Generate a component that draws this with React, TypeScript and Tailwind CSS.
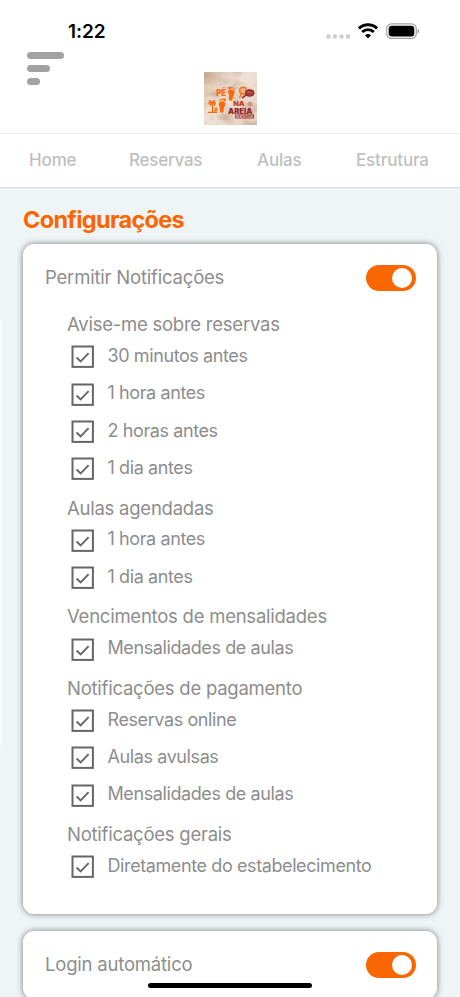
const groups = [
  { title: "Avise-me sobre reservas", items: ["30 minutos antes", "1 hora antes", "2 horas antes", "1 dia antes"] },
  { title: "Aulas agendadas", items: ["1 hora antes", "1 dia antes"] },
  { title: "Vencimentos de mensalidades", items: ["Mensalidades de aulas"] },
  { title: "Notificações de pagamento", items: ["Reservas online", "Aulas avulsas", "Mensalidades de aulas"] },
  { title: "Notificações gerais", items: ["Diretamente do estabelecimento"] },
];

function StatusBar() {
  return (
    <div className="flex h-[52px] items-start justify-between pl-[68px] pr-[40px] pt-[20px]">
      <span className="text-[19px] font-semibold leading-[23px] tracking-[-0.1px] text-black">1:22</span>
      <div className="flex items-start">
        <svg width="26" height="23" viewBox="0 0 26 23" fill="#cecece">
          <circle cx="2.5" cy="16.5" r="2.2" />
          <circle cx="9" cy="16.5" r="2.2" />
          <circle cx="15.5" cy="16.5" r="2.2" />
          <circle cx="22" cy="16.5" r="2.2" />
        </svg>
        <svg className="ml-[6px]" width="21" height="23" viewBox="0 0 21 23" fill="none" stroke="#000" strokeWidth="2.9">
          <path d="M0.9 8.4a13.2 13.2 0 0 1 18.2 0" />
          <path d="M4.2 12a8.3 8.3 0 0 1 11.6 0" />
          <path d="M7 15.3a4.4 4.4 0 0 1 6 0l-3 3.2z" fill="#000" stroke="none" />
        </svg>
        <svg className="ml-[7px]" width="34" height="23" viewBox="0 0 34 23">
          <rect x="0.7" y="3.8" width="29.6" height="14.6" rx="4.8" fill="none" stroke="#a3a3a3" strokeWidth="1.2" />
          <rect x="2.7" y="5.7" width="25.6" height="10.7" rx="3.2" fill="#000" />
          <path d="M31.6 8.7c1.9.8 1.9 4 0 4.8z" fill="#999" />
        </svg>
      </div>
    </div>
  );
}

function Foot({ transform }: { transform: string }) {
  return (
    <g transform={transform} fill="#fa6a08">
      <path d="M0.3 6C0.6 3.2 6.4 2.8 7.2 6C7.8 8.5 6.2 10 6 12C6 14.5 5.6 16.6 3.8 16.6C1.6 16.6 1.6 14 1.8 12C1.9 10 0 8.5 0.3 6Z" />
      <circle cx="1.3" cy="2.2" r="1.5" />
      <circle cx="3.6" cy="1.7" r="1" />
      <circle cx="5.5" cy="2.1" r=".9" />
      <circle cx="7.1" cy="3.2" r=".8" />
    </g>
  );
}

function Logo() {
  return (
    <svg width="53" height="53" viewBox="0 0 53 53" className="block">
      <defs>
        <linearGradient id="sand" x1="0" y1="0" x2="1" y2="1">
          <stop offset="0" stopColor="#d8bda8" />
          <stop offset=".45" stopColor="#efe2d6" />
          <stop offset="1" stopColor="#e4d0bf" />
        </linearGradient>
        <filter id="cloth" x="0" y="0" width="100%" height="100%" colorInterpolationFilters="sRGB">
          <feTurbulence type="fractalNoise" baseFrequency=".05 .08" numOctaves="3" seed="4" />
          <feColorMatrix values="0 0 0 0 .7  0 0 0 0 .56  0 0 0 0 .46  1.3 0 0 0 -.52" />
        </filter>
      </defs>
      <rect width="53" height="53" fill="url(#sand)" />
      <rect width="53" height="53" filter="url(#cloth)" />
      <text x="12.3" y="23.7" fontSize="8.5" fontWeight="900" fill="#fa6a08" textLength="9.8" lengthAdjust="spacingAndGlyphs">PÉ</text>
      <Foot transform="translate(24.5 13.8) rotate(6) scale(.94 .88)" />
      <Foot transform="translate(22 26) rotate(3) scale(-.94 .9)" />
      <text x="29.2" y="34" fontSize="6" fontWeight="900" fill="#c63c1c" textLength="11.3" lengthAdjust="spacingAndGlyphs">NA</text>
      <text x="24" y="41.8" fontSize="8" fontWeight="900" fill="#93252b" textLength="24.5" lengthAdjust="spacingAndGlyphs">AREIA</text>
      <rect x="31.2" y="42.5" width="18.8" height="4" rx=".5" fill="#93252b" />
      <text x="32" y="45.8" fontSize="3" fontWeight="800" fill="#e5cdbb" textLength="17" lengthAdjust="spacingAndGlyphs">BEACH CLUB</text>
      <g fill="none" stroke="#fa6a08" strokeWidth="1.3">
        <circle cx="39" cy="18.5" r="3.3" fill="#dfb493" />
        <path d="M37.5 21.5 35.5 26M8.5 40c.2-3 .2-6-.4-9M3.8 31.5l4-1.5 4.2 1M4.8 28.7l3.3 1.5 2.7-2M8 30.3l-2.3 3.2M8.3 30.3l3 3.2" />
        <path d="M3.8 40.3h9.4M10.5 36.5h3M9.8 38.5h3.5" />
      </g>
      <g fill="none" stroke="#93252b" strokeWidth="1.5">
        <ellipse cx="45.8" cy="21" rx="4" ry="3" fill="#c67862" />
        <path d="m42.5 22.7-4.5 3.5M42.5 19.5c2-1.5 5-1 6.5.7M43 22c2-1 4-.5 5.5.5" />
      </g>
      <g fill="none" stroke="#c97a61" strokeWidth=".8">
        <circle cx="46" cy="32" r="2.1" />
        <path d="m44.5 30.5 3 3M47.5 30.5l-3 3" />
      </g>
    </svg>
  );
}

function Toggle() {
  return (
    <div className="flex h-[26px] w-[50px] shrink-0 items-center justify-end rounded-full bg-[#fa6700] pr-[4.5px]">
      <div className="size-[19.5px] rounded-full bg-white" />
    </div>
  );
}

function Checkbox() {
  return (
    <svg width="23" height="23" viewBox="0 0 23 23" fill="none" stroke="#666" className="shrink-0">
      <rect x="1.5" y="1.5" width="20.4" height="20.4" strokeWidth="2" />
      <path d="m5.6 12.5 4 3.9 8-8.2" strokeWidth="1.9" />
    </svg>
  );
}

export default function App() {
  return (
    <div className="relative flex h-[997px] w-[460px] flex-col overflow-hidden bg-[#eff4f7] font-['Inter','Liberation_Sans',sans-serif] text-[#8d8d8d]">
      <header className="h-[133px] shrink-0 bg-white">
        <StatusBar />
        <div className="flex">
          <div className="flex w-[204px] flex-col gap-[6px] pl-[27px]">
            <div className="h-[7px] w-[37px] rounded-full bg-[#a2a2a2]" />
            <div className="h-[7px] w-[23px] rounded-full bg-[#a2a2a2]" />
            <div className="h-[7px] w-[13px] rounded-full bg-[#a2a2a2]" />
          </div>
          <div className="pt-[20px]"><Logo /></div>
        </div>
      </header>
      <nav className="flex h-[55px] shrink-0 items-center border-b border-t border-b-[#d9dbdc] border-t-[#efefef] bg-white pl-[29px] text-[17px] font-medium tracking-[-0.15px] text-[#c0c0c0]">
        <span className="w-[100px]">Home</span>
        <span className="w-[128px] tracking-[-0.25px]">Reservas</span>
        <span className="w-[99px]">Aulas</span>
        <span>Estrutura</span>
      </nav>
      <main className="flex flex-col px-[23px] pt-[16px]">
        <h1 className="h-[40px] text-[23.5px] font-bold leading-[32px] tracking-[-0.7px] text-[#fa6700]">Configurações</h1>
        <section className="h-[670px] rounded-[11px] bg-white pl-[22px] pr-[21px] pt-[21px] shadow-[0_0_6px_rgba(0,0,0,0.5)]">
          <div className="flex h-[26px] items-center justify-between">
            <span className="pb-[2px] text-[18.5px] leading-[26px] tracking-[-0.2px]">Permitir Notificações</span>
            <Toggle />
          </div>
          <div className="pl-[22px] pt-[13.1px]">
            {groups.map((group) => (
              <div key={group.title}>
                <h2 className="h-[34px] pt-[7px] text-[18.5px] leading-[26px] tracking-[-0.24px]">{group.title}</h2>
                {group.items.map((item) => (
                  <div key={item} className="flex h-[37.4px] items-center pl-[4px]">
                    <Checkbox />
                    <span className="pb-[2px] pl-[13.5px] text-[18px] leading-[24px] tracking-[-0.4px]">{item}</span>
                  </div>
                ))}
              </div>
            ))}
          </div>
        </section>
        <section className="mt-[17px] h-[68px] shrink-0 rounded-[11px] bg-white pl-[22px] pr-[21px] pt-[21px] shadow-[0_0_6px_rgba(0,0,0,0.5)]">
          <div className="flex h-[26px] items-center justify-between">
            <span className="pb-[2px] text-[18.5px] leading-[26px] tracking-[-0.2px]">Login automático</span>
            <Toggle />
          </div>
        </section>
      </main>
      <div className="absolute left-0 top-[320px] h-[427px] w-[2px] rounded-r-full bg-[#f7f9fa]" />
      <div className="absolute left-[148px] top-[983px] h-[5px] w-[164px] rounded-full bg-black" />
    </div>
  );
}
